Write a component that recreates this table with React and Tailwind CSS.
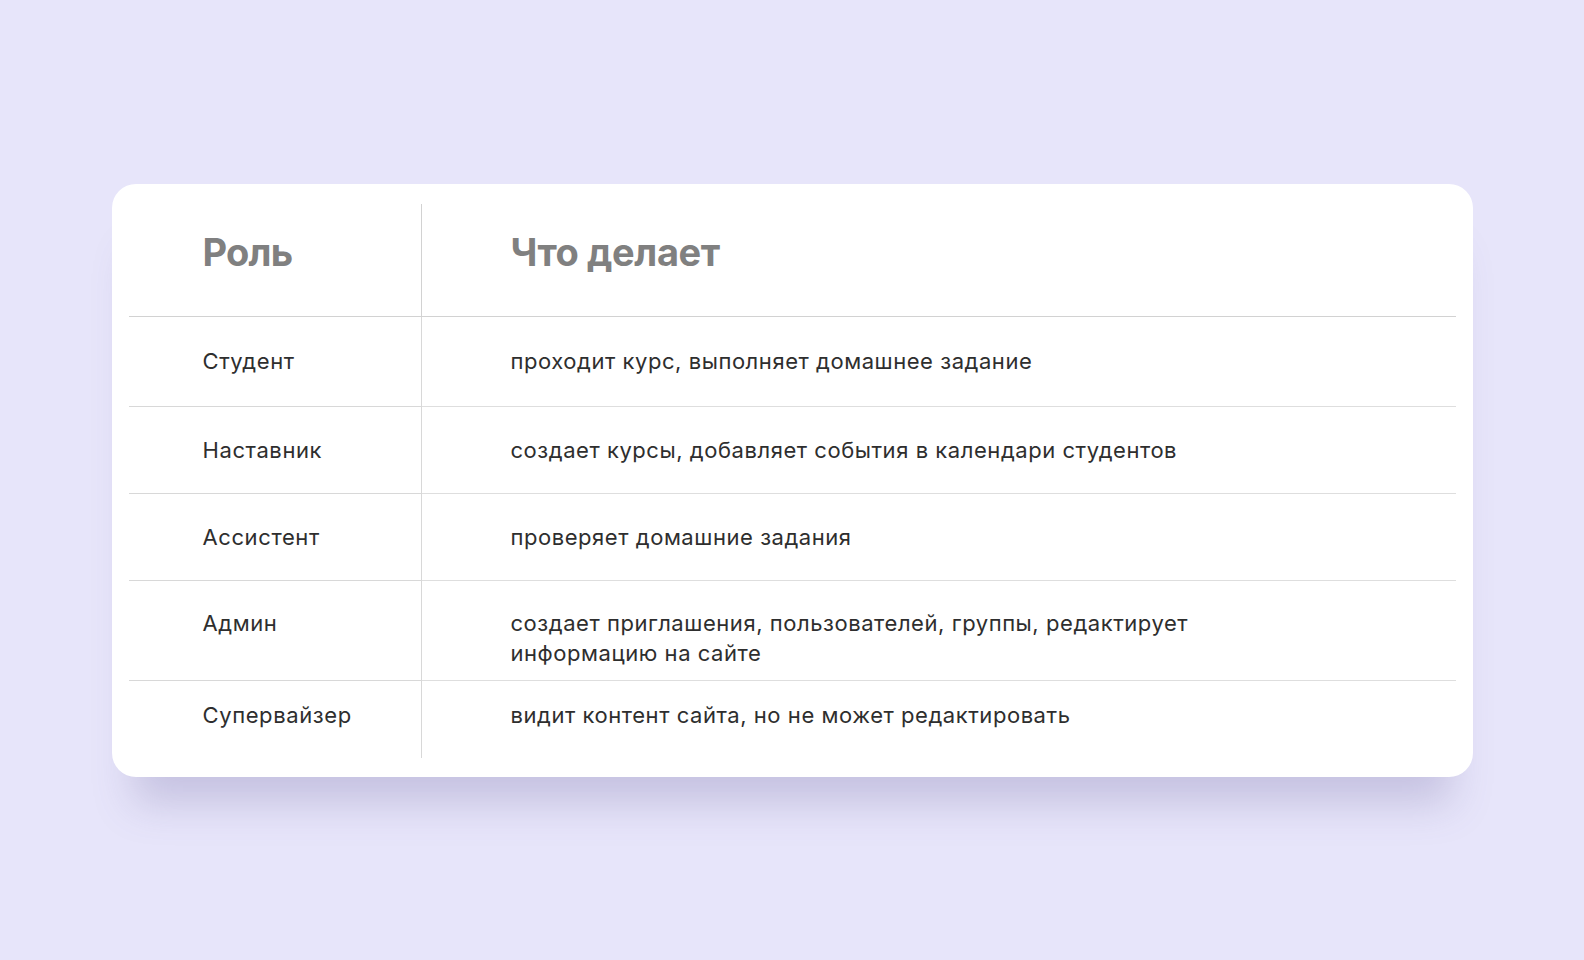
import React from 'react'

const rows = [
  { role: 'Студент', desc: 'проходит курс, выполняет домашнее задание', h: 'h-[90px]', pt: 'pt-[29px]' },
  { role: 'Наставник', desc: 'создает курсы, добавляет события в календари студентов', h: 'h-[87px]', pt: 'pt-[28px]' },
  { role: 'Ассистент', desc: 'проверяет домашние задания', h: 'h-[87px]', pt: 'pt-[28px]' },
  {
    role: 'Админ',
    desc: 'создает приглашения, пользователей, группы, редактирует информацию на сайте',
    h: 'h-[100px]',
    pt: 'pt-[27px]'
  },
  { role: 'Супервайзер', desc: 'видит контент сайта, но не может редактировать', h: 'h-[77px]', pt: 'pt-[19px]', last: true }
]

export default function App() {
  return (
    <div
      className="w-full h-[960px] bg-[#e7e5fa] flex items-center justify-center"
      style={{ fontFamily: 'Inter, "Noto Sans", sans-serif' }}
    >
      <div className="w-[1361px] h-[593px] bg-white rounded-[24px] px-[17px] pt-[20px] pb-[19px] shadow-[0_48px_40px_-22px_rgba(100,92,150,0.25)]">
        <div className="grid grid-cols-[293px_1fr]">
          <div className="h-[113px] border-r border-b border-[#d2d2d2] pl-[74px] pt-[26px]">
            <span className="text-[38px] font-bold text-[#808080] leading-[44px] tracking-[-0.8px]">Роль</span>
          </div>
          <div className="h-[113px] border-b border-[#d2d2d2] pl-[89px] pt-[26px]">
            <span className="text-[38px] font-bold text-[#808080] leading-[44px] tracking-[-0.4px]">Что делает</span>
          </div>

          {rows.map((r) => (
            <React.Fragment key={r.role}>
              <div
                className={`${r.h} ${r.pt} border-r border-[#d8d8d8] pl-[74px] ${r.last ? '' : 'border-b'}`}
              >
                <span className="text-[22px] leading-[30px] tracking-[0.6px] text-[#2e2e2e]">{r.role}</span>
              </div>
              <div
                className={`${r.h} ${r.pt} border-[#dedede] pl-[89px] ${r.last ? '' : 'border-b'}`}
              >
                <p className="text-[22px] leading-[30px] tracking-[0.55px] text-[#2e2e2e] max-w-[695px]">{r.desc}</p>
              </div>
            </React.Fragment>
          ))}
        </div>
      </div>
    </div>
  )
}
